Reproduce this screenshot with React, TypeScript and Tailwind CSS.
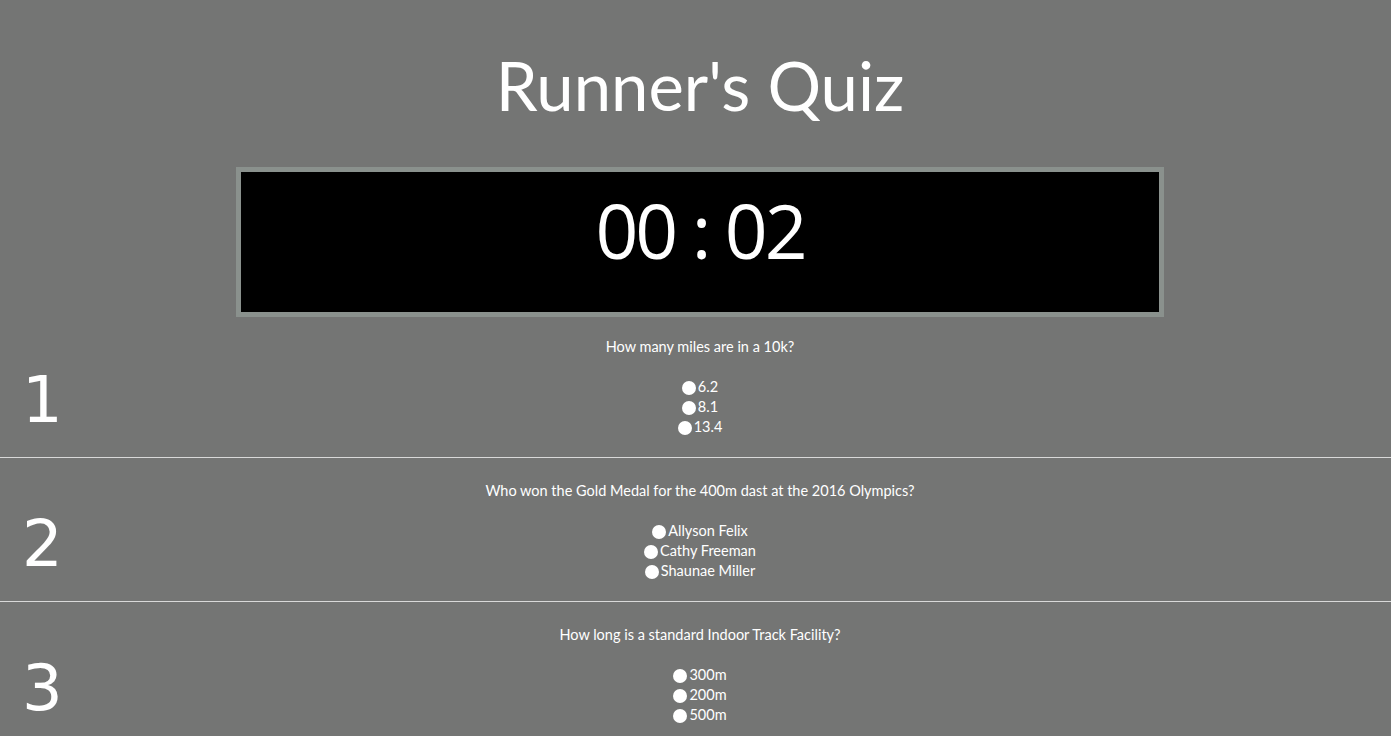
import { useState } from 'react';

const questions = [
  {
    id: 1,
    text: 'How many miles are in a 10k?',
    options: ['6.2', '8.1', '13.4'],
  },
  {
    id: 2,
    text: 'Who won the Gold Medal for the 400m dast at the 2016 Olympics?',
    options: ['Allyson Felix', 'Cathy Freeman', 'Shaunae Miller'],
  },
  {
    id: 3,
    text: 'How long is a standard Indoor Track Facility?',
    options: ['300m', '200m', '500m'],
  },
];

export default function App() {
  const [answers, setAnswers] = useState<Record<number, string>>({});

  return (
    <div
      className="min-h-screen bg-[#747574] text-white"
      style={{ fontFamily: 'Lato, "Open Sans", sans-serif' }}
    >
      {/* Title */}
      <h1 className="pt-[45px] pl-[9px] text-center text-[67px] leading-[1.2] font-normal">Runner's Quiz</h1>

      {/* Timer */}
      <div className="mt-[42px] pl-[9px] flex justify-center">
        <div className="w-[928px] h-[150px] border-[5px] border-[#8a918d] bg-black pt-[2px] text-center">
          <span className="text-[75px] tracking-[-3px]" style={{ fontFamily: '"Open Sans", sans-serif' }}>
            00 : 02
          </span>
        </div>
      </div>

      {/* Questions */}
      <div className="-mt-[3px]">
        {questions.map((q) => (
          <div key={q.id} className="grid grid-cols-[1fr_auto_1fr] border-b border-[#d9d9d9] h-[144px]">
            <div
              className="pt-[54px] pl-[22px] text-[64px] leading-[64px]"
              style={{ fontFamily: '"DejaVu Sans", sans-serif' }}
            >
              {q.id}
            </div>
            <div className="pt-[23px] pl-[9px] text-center text-[14.5px] leading-[20px]">
              <p>{q.text}</p>
              <div className="mt-[20px] flex flex-col items-center">
                {q.options.map((opt) => (
                  <label key={opt} className="flex items-center gap-[2px] h-[20px]">
                    <input
                      type="radio"
                      name={`q${q.id}`}
                      checked={answers[q.id] === opt}
                      onChange={() => setAnswers((prev) => ({ ...prev, [q.id]: opt }))}
                      className="appearance-none w-[14px] h-[14px] rounded-full bg-white m-0 mt-[1px]"
                    />
                    <span>{opt}</span>
                  </label>
                ))}
              </div>
            </div>
            <div />
          </div>
        ))}
      </div>
    </div>
  );
}
